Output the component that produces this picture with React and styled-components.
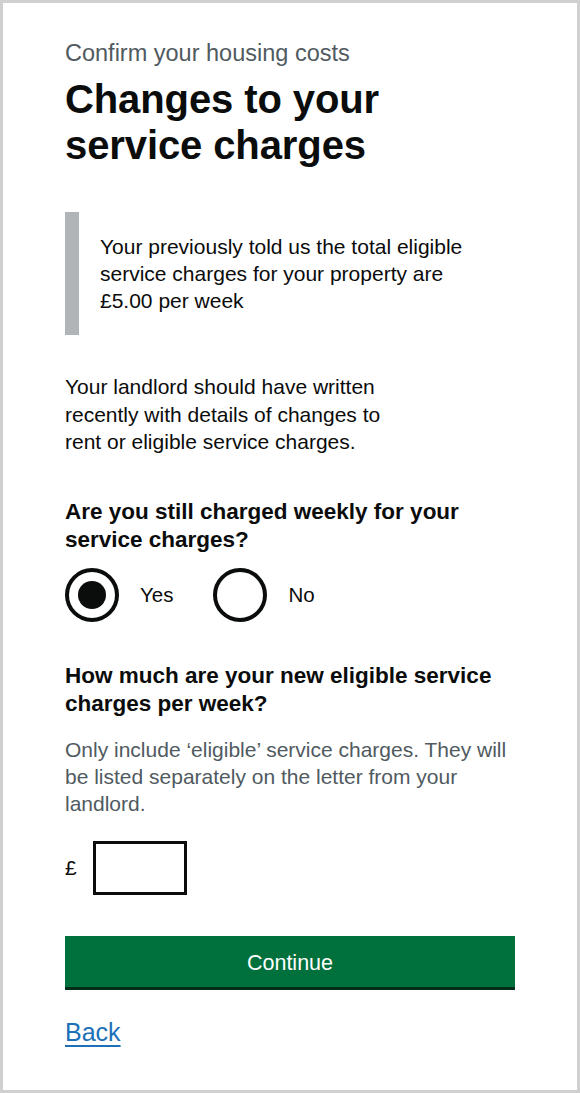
import React, { useState } from 'react'
import styled, { createGlobalStyle } from 'styled-components'

const GlobalStyle = createGlobalStyle`
  * {
    box-sizing: border-box;
  }
  body {
    margin: 0;
    background: #ffffff;
    font-family: "Liberation Sans", Arial, sans-serif;
    color: #0b0c0c;
  }
`

const Frame = styled.div`
  width: 580px;
  height: 1093px;
  border: 3px solid #d0d0d0;
  padding: 35px 62px 0 62px;
  background: #ffffff;
`

const Caption = styled.span`
  display: block;
  font-size: 23.5px;
  line-height: 30px;
  color: #505a5f;
`

const Heading = styled.h1`
  margin: 8px 0 0 0;
  font-size: 40px;
  line-height: 46px;
  font-weight: 700;
  letter-spacing: -0.1px;
`

const Inset = styled.div`
  margin-top: 44px;
  border-left: 14px solid #b1b4b6;
  padding: 21px 40px 21px 21px;
  font-size: 21px;
  line-height: 27px;
`

const Body = styled.p`
  margin: ${(p) => p.$top || 0}px 0 0 0;
  max-width: ${(p) => p.$max || 450}px;
  font-size: 21px;
  line-height: ${(p) => p.$lh || 27}px;
  color: ${(p) => (p.$hint ? '#505a5f' : '#0b0c0c')};
`

const Question = styled.h2`
  margin: ${(p) => p.$top}px 0 0 0;
  font-size: 22.5px;
  line-height: 28px;
  font-weight: 700;
`

const RadioGroup = styled.div`
  display: flex;
  align-items: center;
  gap: 40px;
  margin-top: 14px;
`

const RadioItem = styled.label`
  display: flex;
  align-items: center;
  gap: 21px;
  font-size: 20.5px;
  cursor: pointer;
`

const Circle = styled.span`
  width: 54px;
  height: 54px;
  border: 4px solid #0b0c0c;
  border-radius: 50%;
  display: flex;
  align-items: center;
  justify-content: center;

  &::after {
    content: '';
    width: 28px;
    height: 28px;
    border-radius: 50%;
    background: #0b0c0c;
    display: ${(p) => (p.$checked ? 'block' : 'none')};
  }
`

const InputRow = styled.div`
  display: flex;
  align-items: center;
  gap: 16px;
  margin-top: 24px;
  font-size: 21px;
`

const Input = styled.input`
  width: 94px;
  height: 54px;
  border: 3px solid #0b0c0c;
  border-radius: 0;
  padding: 4px 8px;
  font-family: inherit;
  font-size: 21px;
  outline: none;
`

const Button = styled.button`
  display: block;
  width: 100%;
  height: 51px;
  margin-top: 41px;
  border: none;
  border-radius: 0;
  background: #00703c;
  box-shadow: 0 3px 0 #002d18;
  color: #ffffff;
  font-family: inherit;
  font-size: 21.5px;
  line-height: 53px;
  cursor: pointer;
`

const BackLink = styled.a`
  display: inline-block;
  margin-top: 30px;
  font-size: 25px;
  line-height: 30px;
  color: #1d70b8;
  text-decoration: underline;
  text-underline-offset: 4px;
  text-decoration-thickness: 2px;
`

const App = () => {
  const [weekly, setWeekly] = useState('yes')
  const [amount, setAmount] = useState('')

  return (
    <>
      <GlobalStyle />
      <Frame>
        <Caption>Confirm your housing costs</Caption>
        <Heading>Changes to your service charges</Heading>
        <Inset>
          Your previously told us the total eligible service charges for your property are £5.00 per week
        </Inset>
        <Body $top={38} $max={340} $lh={27.5}>
          Your landlord should have written recently with details of changes to rent or eligible service charges.
        </Body>
        <Question $top={42}>Are you still charged weekly for your service charges?</Question>
        <RadioGroup>
          <RadioItem onClick={() => setWeekly('yes')}>
            <Circle $checked={weekly === 'yes'} />
            Yes
          </RadioItem>
          <RadioItem onClick={() => setWeekly('no')}>
            <Circle $checked={weekly === 'no'} />
            No
          </RadioItem>
        </RadioGroup>
        <Question $top={40}>How much are your new eligible service charges per week?</Question>
        <Body $top={18} $hint>
          Only include ‘eligible’ service charges. They will be listed separately on the letter from your landlord.
        </Body>
        <InputRow>
          £
          <Input value={amount} onChange={(e) => setAmount(e.target.value)} />
        </InputRow>
        <Button>Continue</Button>
        <BackLink href="#">Back</BackLink>
      </Frame>
    </>
  )
}

export default App
